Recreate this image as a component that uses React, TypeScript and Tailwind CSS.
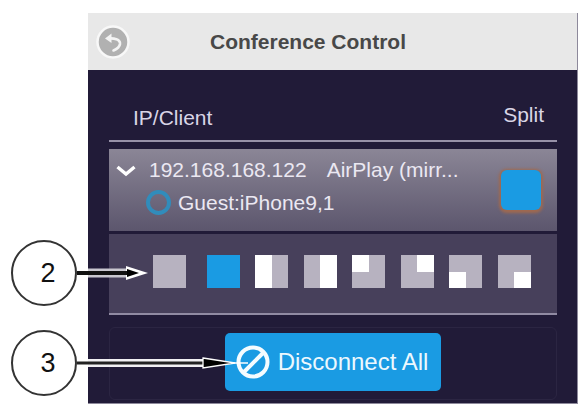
import React, { useState } from "react";

type SplitMode = {
  name: string;
  /** area of the tile covered by the client, none for the plain tiles */
  area?: string;
};

const SPLIT_MODES: SplitMode[] = [
  { name: "Off" },
  { name: "Full screen" },
  { name: "Left half", area: "col-span-1 row-span-2" },
  { name: "Right half", area: "col-start-2 row-span-2" },
  { name: "Top left", area: "col-start-1 row-start-1" },
  { name: "Top right", area: "col-start-2 row-start-1" },
  { name: "Bottom left", area: "col-start-1 row-start-2" },
  { name: "Bottom right", area: "col-start-2 row-start-2" },
];

const BackIcon: React.FC = () => (
  <svg viewBox="0 0 34 34" className="w-[34px] h-[34px]" aria-hidden="true">
    <circle cx="17" cy="17" r="15.5" fill="#b1b1b1" stroke="#f8f8f8" strokeWidth="2.5" />
    <path
      d="M12 13.500C18 13 24.500 14 24 19C23.600 22 21 24 17.500 25.500"
      fill="none"
      stroke="#f4f4f4"
      strokeWidth="2.600"
      strokeLinecap="round"
    />
    <path d="M9 13.500l6.500-5v9.500z" fill="#f4f4f4" />
  </svg>
);

const NoEntryIcon: React.FC = () => (
  <svg viewBox="0 0 34 34" className="w-[34px] h-[34px] shrink-0" aria-hidden="true">
    <g fill="none" stroke="#f5fcff" strokeWidth="4">
      <circle cx="17" cy="17" r="14.5" />
      <path d="M8 27L27 8" />
    </g>
  </svg>
);

const SplitTile: React.FC<{
  mode: SplitMode;
  active: boolean;
  onSelect: () => void;
}> = ({ mode, active, onSelect }) => (
  <button
    type="button"
    aria-label={mode.name}
    aria-pressed={active}
    onClick={onSelect}
    className={`grid grid-cols-2 grid-rows-2 w-[33px] h-[33px] first:mr-[5px] ${
      active ? "bg-[#1a9be3]" : "bg-[#b7b2c0]"
    }`}
  >
    {mode.area && <span className={`${mode.area} bg-white`} />}
  </button>
);

const Callout: React.FC<{ label: string; children: React.ReactNode }> = ({
  label,
  children,
}) => (
  <div className="flex items-center">
    <span className="flex items-center justify-center shrink-0 w-[66px] h-[66px] rounded-full border-2 border-[#333] pl-2 text-[27px] leading-8 text-[#111]">
      {label}
    </span>
    {children}
  </div>
);

const App: React.FC = () => {
  const [selected, setSelected] = useState("Full screen");

  return (
    <main className="relative bg-white pt-[13px] pb-[5px] pl-[88px] pr-[3px] font-['Liberation_Sans',Arial,sans-serif]">
      <section className="bg-[#211b38] border-b border-r border-[#8d899b]">
        {/* Header */}
        <header className="flex items-center h-[57px] gap-20 pl-2 bg-[#e8e8e8]">
          <button type="button" aria-label="Back">
            <BackIcon />
          </button>
          <h1 className="text-[21px] leading-6 font-bold text-[#484848]">
            Conference Control
          </h1>
        </header>

        <div className="pl-[21px] pr-5 pb-[3px]">
          {/* Column titles */}
          <div className="flex justify-between h-[72px] pt-[33px] pl-6 pr-[13px] border-b-2 border-[#9791a8] text-[21px] leading-6 text-[#d9d5e6]">
            <span className="pt-[3px]">IP/Client</span>
            <span>Split</span>
          </div>

          {/* Client */}
          <div className="mt-[7px] flex items-center justify-between h-[82px] pl-[7px] pr-4 bg-linear-to-b from-[#8b8696] to-[#5c566d] text-[21px] leading-[33px] text-[#ebe8f2]">
            <div className="flex gap-[10px] pb-2">
              <svg viewBox="0 0 20 12" className="mt-3 w-5 h-3 shrink-0" aria-hidden="true">
                <path d="M1.500 2l8.500 7 8.500-7" fill="none" stroke="#fff" strokeWidth="3.400" />
              </svg>
              <div>
                <p className="flex gap-5 pl-[3px] whitespace-nowrap">
                  <span>192.168.168.122</span>
                  <span>AirPlay (mirr...</span>
                </p>
                <p className="flex items-center gap-[7px]">
                  <span className="w-[25px] h-[25px] rounded-full border-4 border-[#318cbb]" />
                  Guest:iPhone9,1
                </p>
              </div>
            </div>
            <button
              type="button"
              aria-label="Split layout"
              className="w-10 h-10 rounded-md bg-[#1a9be3] shadow-[0_1px_3px_2px_#a0694f]"
            />
          </div>

          {/* Split layouts */}
          <div className="mt-[3px] flex items-center justify-between h-[81px] pl-11 pr-[26px] pb-1 bg-[#47405b] border-b-2 border-[#918ba3]">
            {SPLIT_MODES.map((mode) => (
              <SplitTile
                key={mode.name}
                mode={mode}
                active={selected === mode.name}
                onSelect={() => setSelected(mode.name)}
              />
            ))}
          </div>

          {/* Footer action */}
          <div className="mt-3 flex justify-center h-[73px] pt-[5px] pb-2 border border-[#2b2542] rounded-md">
            <button
              type="button"
              className="flex items-center gap-2 h-[58px] pl-[11px] pr-[13px] rounded-[5px] bg-[#1a9be3] text-2xl text-[#ecf8fe] whitespace-nowrap"
            >
              <NoEntryIcon />
              Disconnect All
            </button>
          </div>
        </div>
      </section>

      {/* Callouts over the panel */}
      <div className="pointer-events-none absolute left-[11px] top-60 flex flex-col gap-6">
        <Callout label="2">
          <svg viewBox="0 0 72 16" className="w-[72px] h-4" aria-hidden="true">
            <path d="M11 8H52" stroke="#c9c7cf" strokeWidth="9" />
            <path d="M49 1L71 8l-22 7z" fill="#fff" />
            <path d="M0 8H54" stroke="#111" strokeWidth="4" />
            <path d="M50 4L62 8l-12 4z" fill="#000" />
          </svg>
        </Callout>
        <Callout label="3">
          <svg viewBox="0 0 180 16" className="w-[180px] h-4" aria-hidden="true">
            <path d="M11 8H128" stroke="#f1f0f3" strokeWidth="8" />
            <path d="M0 8H130" stroke="#222" strokeWidth="3" />
            <path d="M126 3L158 8l-32 5z" fill="#000" stroke="#fff" strokeWidth="1.300" />
            <path d="M156 8H171" stroke="#fff" strokeWidth="1.500" />
          </svg>
        </Callout>
      </div>
    </main>
  );
};

export default App;
